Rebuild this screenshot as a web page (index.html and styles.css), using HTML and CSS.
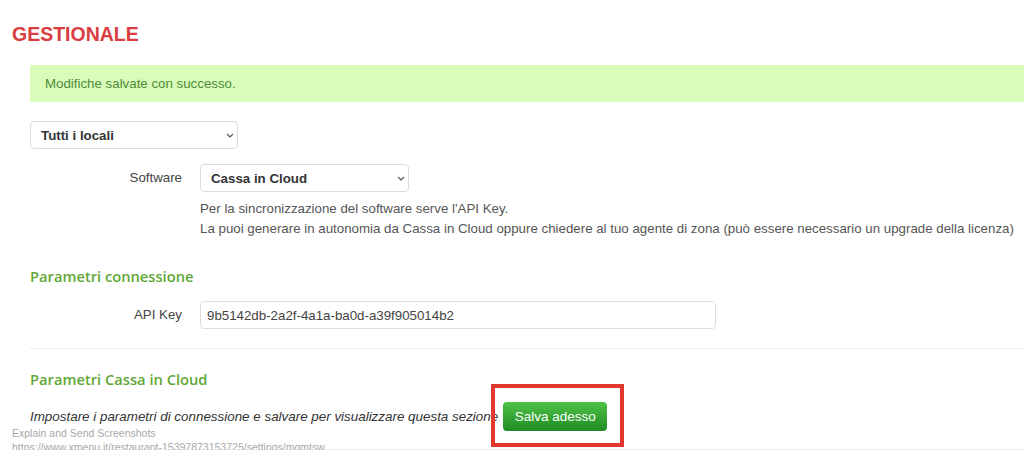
FILE: index.html
```html
<!DOCTYPE html>
<html lang="it">
<head>
  <meta charset="UTF-8" />
  <meta name="viewport" content="width=device-width, initial-scale=1.0"/>
  <title>Gestionale</title>
  <link rel="stylesheet" href="styles.css">
</head>
<body>

  <h1 class="page-title">GESTIONALE</h1>

  <div class="content">
    <div class="alert-success">Modifiche salvate con successo.</div>

    <div class="select-box locale-select">
      <select>
        <option>Tutti i locali</option>
      </select>
      <svg class="chevron" width="8" height="5" viewBox="0 0 8 5"><path d="M1 1l3 3 3-3" fill="none" stroke="#555" stroke-width="1.2"/></svg>
    </div>

    <div class="form-row">
      <label>Software</label>
      <div class="field">
        <div class="select-box software-select">
          <select>
            <option>Cassa in Cloud</option>
          </select>
          <svg class="chevron" width="8" height="5" viewBox="0 0 8 5"><path d="M1 1l3 3 3-3" fill="none" stroke="#555" stroke-width="1.2"/></svg>
        </div>
        <p class="help">
          Per la sincronizzazione del software serve l'API Key.<br>
          La puoi generare in autonomia da Cassa in Cloud oppure chiedere al tuo agente di zona (può essere necessario un upgrade della licenza)
        </p>
      </div>
    </div>

    <h2 class="section-title">Parametri connessione</h2>

    <div class="form-row">
      <label>API Key</label>
      <div class="field">
        <input type="text" class="api-input" value="9b5142db-2a2f-4a1a-ba0d-a39f905014b2">
      </div>
    </div>

    <hr class="divider">

    <h2 class="section-title second">Parametri Cassa in Cloud</h2>

    <div class="save-row">
      <em class="save-note">Impostare i parametri di connessione e salvare per visualizzare questa sezione</em>
      <span class="btn-wrap">
        <button class="btn-save">Salva adesso</button>
        <span class="highlight"></span>
      </span>
    </div>

    <hr class="divider last">
  </div>

  <div class="watermark">
    Explain and Send Screenshots<br>
    https://www.xmenu.it/restaurant-15397873153725/settings/mgmtsw
  </div>

</body>
</html>
```

FILE: styles.css
```css
body {
  margin: 0;
  font-family: "Liberation Sans", Arial, sans-serif;
  font-size: 13.3px;
  color: #333;
  background: #fff;
  position: relative;
  overflow: hidden;
}

.page-title {
  margin: 22px 0 0 12px;
  font-size: 19.5px;
  line-height: 24px;
  font-weight: bold;
  color: #d93d40;
}

.content {
  padding-left: 30px;
}

.alert-success {
  margin-top: 19px;
  height: 37px;
  line-height: 37px;
  padding-left: 15px;
  background: #d9fcb9;
  color: #4f8b3b;
}

.select-box {
  position: relative;
  height: 28px;
}

.select-box select {
  appearance: none;
  width: 100%;
  height: 28px;
  padding: 0 10px;
  border: 1px solid #dcdcdc;
  border-radius: 4px;
  background: #fff;
  font-family: inherit;
  font-size: 13.3px;
  font-weight: bold;
  color: #333;
}

.select-box .chevron {
  position: absolute;
  right: 4px;
  top: 12px;
  pointer-events: none;
}

.locale-select {
  width: 208px;
  margin-top: 19px;
}

.form-row {
  display: grid;
  grid-template-columns: 170px 1fr;
  margin-top: 15px;
}

.form-row label {
  text-align: right;
  padding-right: 18px;
  line-height: 28px;
  color: #444;
}

.software-select {
  width: 209px;
}

.help {
  margin: 7px 0 0;
  line-height: 20px;
  color: #555;
}

.section-title {
  margin: 27px 0 0;
  font-family: "Open Sans", sans-serif;
  font-size: 14.7px;
  line-height: 20px;
  font-weight: 600;
  color: #5fa737;
}

.section-title.second {
  margin-top: 20px;
}

.api-input {
  width: 516px;
  height: 28px;
  box-sizing: border-box;
  padding: 0 6px;
  border: 1px solid #dcdcdc;
  border-radius: 4px;
  font-family: inherit;
  font-size: 13.3px;
  color: #444;
  outline: none;
}

.divider {
  margin: 19px 0 0;
  border: none;
  border-top: 1px solid #ececec;
}

.divider.last {
  margin-top: 18px;
}

.save-row {
  display: flex;
  align-items: center;
  margin-top: 13px;
}

.save-note {
  font-size: 13.4px;
  color: #333;
}

.btn-wrap {
  position: relative;
  margin-left: 5px;
}

.btn-save {
  display: block;
  width: 104px;
  height: 29px;
  border: none;
  border-radius: 4px;
  background: linear-gradient(to bottom, #4fc247, #1f8b22);
  color: #fff;
  font-family: inherit;
  font-size: 13.5px;
  cursor: pointer;
}

.highlight {
  position: absolute;
  top: -18px;
  left: -12px;
  right: -17px;
  bottom: -16px;
  border: 4px solid #e2382f;
  pointer-events: none;
}

.watermark {
  position: absolute;
  left: 12px;
  top: 426px;
  font-size: 10.5px;
  line-height: 14px;
  color: #a9a9a9;
  text-shadow: 0 0 2px #fff;
}
```
